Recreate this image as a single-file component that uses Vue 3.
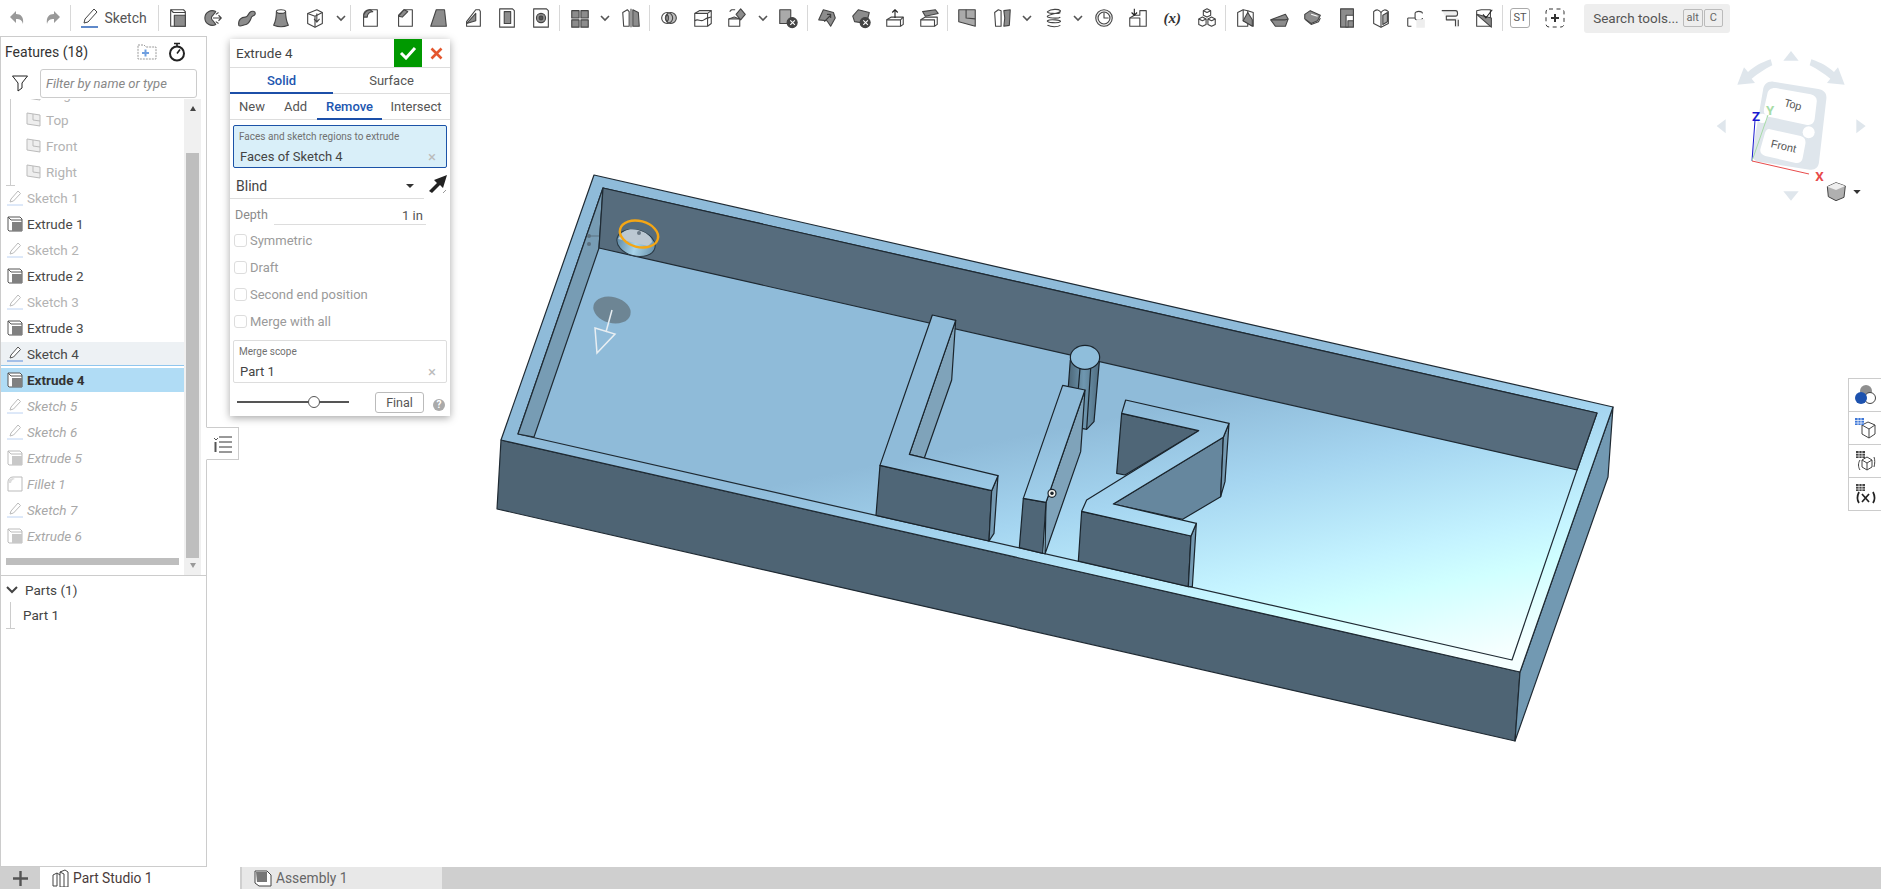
<script setup>
const G = '#8c8c8c', W = '#fff', N = 'none', D = '#3c3c3c';
const i = (name, ...paths) => ({ type: 'icon', name, paths });
const sep = { type: 'sep' };
const chev = { type: 'chev' };

const extrudeP = [['M4 3h14l2 2v16H4z', W], ['M4 3l3 3h13', N], ['M8 9h12v12H8z', G]];

const group1 = [
  i('extrude', ...extrudeP),
  i('revolve', ['M15 5a8 8 0 1 0 0 14l-3-4a3.5 3.5 0 0 1 0-6z', G], ['M12 12h9M18 9l3 3-3 3M15 8l3-2M15 16l3 2', N]),
  i('sweep', ['M3 20c-1-6 3-9 7-9 3 0 3-3 5-5s6-2 6 1-3 2-4 4-2 7-6 8-7 3-8 1z', G]),
  i('loft', ['M7 5c0 6-1 11-3 15 5 2 11 2 16 0-2-4-3-9-3-15z', G], ['M7 5a5 2 0 1 0 10 0a5 2 0 1 0-10 0z', W]),
  i('thicken', ['M4 7l10-4 6 3v12l-8 4-8-4z', W], ['M4 7l8 3 8-4M12 10v12', N], ['M14 7v9M11 13l3 3.500 3-3.500', N]),
  chev,
  sep,
  i('fillet', ['M5 21V9a6 6 0 0 1 6-6h9v18z', W], ['M5 11a8 8 0 0 1 7-8l3 2a6 6 0 0 0-6 6z', G]),
  i('chamfer', ['M5 21V9l6-6h9v18z', W], ['M5 10l6-7 4 2-6 6z', G]),
  i('draft', ['M9 3h9l2 18H3z', G]),
  i('rib', ['M5 21v-5L15 3h4l1 2v16z', W], ['M5 18l10-11v8z', G]),
  i('shell', ['M4 2h14l2 2v18H4z', W], ['M9 5h7v13H9z', G]),
  i('hole', ['M4 2h14l2 2v18H4z', W], ['M7 12a5 5 0 1 0 10 0a5 5 0 1 0-10 0z', G], ['M10 12a2 2 0 1 0 4 0a2 2 0 1 0-4 0z', '#555']),
  sep,
  i('pattern', ['M3 4h8v8H3zM13 4h8v8h-8zM3 14h8v8H3zM13 14h8v8h-8z', G]),
  chev,
  i('mirror', ['M3 6l5-3 2 2v16H4z', W], ['M14 3l6 3 1 15h-7z', G], ['M12 2v20', N]),
  sep,
  i('boolean', ['M8 12a6 6 0 1 0 12 0a6 6 0 1 0-12 0z', '#bbb'], ['M4 12a6 6 0 1 0 12 0a6 6 0 1 0-12 0z', N], ['M10 8a6 6 0 0 1 0 8a6 6 0 0 1 0-8z', G]),
  i('split', ['M3 7l5-3h13v14l-4 3H3z', W], ['M3 7h14v14M17 7l4-3', N], ['M3 15c4-3 6 2 10-1s5-2 8-3', N]),
  i('transform', ['M16 2l5 6-5 6-5-6z', G], ['M3 13l6-2 6 2v8H3z', W], ['M3 13h12M6 3h4M4 5l2-2', N]),
  chev,
  i('delete', ['M3 3h12v15H3z', '#aaa'], ['M11 17a5.500 5.500 0 1 0 11 0a5.500 5.500 0 1 0-11 0z', '#444'], ['M14.500 14.500l5 5M19.500 14.500l-5 5', N, W]),
  sep,
  i('moveface', ['M3 14L8 3l11 3 2 6-5 9-4-6z', G], ['M9 16l7-7M12 8h4v4', N, D]),
  i('delface', ['M3 10l6-7 12 3-3 12-13-2z', G], ['M11 17a5.500 5.500 0 1 0 11 0a5.500 5.500 0 1 0-11 0z', '#444'], ['M14.500 14.500l5 5M19.500 14.500l-5 5', N, W]),
  i('offset', ['M3 14l5-3h13v8l-3 2H3z', W], ['M3 14h15v7M18 14l3-3', N], ['M12 12V3M9 6l3-3 3 3', N, '#222']),
  i('replace', ['M3 14l5-3h13v8l-3 2H3z', W], ['M3 14h15v7', N], ['M5 5l14-2 3 4-14 3z', G]),
  sep,
  i('plane', ['M3 3h18v18L3 16z', '#aaa'], ['M11 3v9l10 1', N]),
  i('wrap', ['M4 6l4-3 3 1v17H5z', W], ['M14 4l7-1-1 17-6 1 1-9z', G]),
  chev,
  i('helix', ['M6 5c4-3 12-3 14-1s-12 4-14 6 12 3 14 1M6 10c-2 2 12 3 14 1M6 15c-2 2 12 3 14 1s-12-3-14-1M6 5c-2 2 12 3 14 1M6 20c4 2 11 2 14 0', N]),
  chev,
  i('clock', ['M3 12a9 9 0 1 0 18 0a9 9 0 1 0-18 0z', '#eee'], ['M5.500 12a6.500 6.500 0 1 0 13 0a6.500 6.500 0 1 0-13 0z', W], ['M12 6v6h5', N]),
  i('derive', ['M3 12l5-3h6V4h7v17H3z', W], ['M3 12h11v9', N], ['M8 2v7l-3-3M8 9l3-3', N, '#222']),
  { type: 'var' },
  i('cubes', ['M12 2l4 2v5l-4 2-4-2V4z', W], ['M7 11l4 2v6l-4 2-4-2v-6z', W], ['M17 11l4 2v6l-4 2-4-2v-6z', W], ['M8 4l4 2 4-2M3 13l4 2 4-2M13 13l4 2 4-2', N]),
  sep,
  i('sm1', ['M4 6l6-3 5 1v17H4z', W], ['M10 3v12l11 6V6l-6-2', N], ['M10 15l10 6v-7l-5-8z', G]),
  i('sm2', ['M3 14l16-6 3 5-3 8H8z', G], ['M3 14l16 0 3-1', N]),
  i('sm3', ['M3 8l6-4 11 5-3 6-7 3-7-5z', G], ['M4 14l6 5 8-3 2-4', N], ['M10 8l7 2', N, W]),
  i('sm4', ['M5 2h14v20H5z', G], ['M11 9h8v6h-6v7h-2z', W]),
  i('sm5', ['M4 5c3-3 6-2 8 1 2-3 5-4 8-1v13l-8 4-8-4z', W], ['M12 6v16', N], ['M14 9l5-3v10l-5 3z', '#aaa']),
  i('sm6', ['M3 12v9M3 12h8V7c0-3 8-3 8 0M11 12c0 3 8 3 8 0M3 21h4', N], ['M13 14h8v8h-8z', '#eee', '#eee']),
  i('sm7', ['M3 3h17v7H9v2h12v10h-4v-7H9z', '#eee', 'none'], ['M3 4h15c3 0 3 6 0 6H8v4h10v7M21 14v7', N]),
  i('sm8', ['M4 4l5-1h10v18H4z', W], ['M4 8l16 14V12z', G], ['M11 8l3 4 7-9', N, '#222']),
];

const planes = [
  { label: 'Origin', kind: 'plane' },
  { label: 'Top', kind: 'plane' },
  { label: 'Front', kind: 'plane' },
  { label: 'Right', kind: 'plane' },
];
const features = [
  { label: 'Sketch 1', kind: 'sketch', cls: 'off' },
  { label: 'Extrude 1', kind: 'extrude' },
  { label: 'Sketch 2', kind: 'sketch', cls: 'off' },
  { label: 'Extrude 2', kind: 'extrude' },
  { label: 'Sketch 3', kind: 'sketch', cls: 'off' },
  { label: 'Extrude 3', kind: 'extrude' },
  { label: 'Sketch 4', kind: 'sketch', cls: 'hover' },
  { label: 'Extrude 4', kind: 'extrude', cls: 'current' },
  { label: 'Sketch 5', kind: 'sketch', cls: 'roll' },
  { label: 'Sketch 6', kind: 'sketch', cls: 'roll' },
  { label: 'Extrude 5', kind: 'extrude', cls: 'roll' },
  { label: 'Fillet 1', kind: 'fillet', cls: 'roll' },
  { label: 'Sketch 7', kind: 'sketch', cls: 'roll' },
  { label: 'Extrude 6', kind: 'extrude', cls: 'roll' },
];
const checks = ['Symmetric', 'Draft', 'Second end position', 'Merge with all'];
</script>

<template>
  <div class="app">
    <header class="toolbar">
      <button class="tb-icon"><svg width="20" height="20" viewBox="0 0 20 20"><path d="M8 3L2 9l6 6v-4c4 0 6 1 7 5 1-7-2-10-7-10z" fill="#999"/></svg></button>
      <button class="tb-icon"><svg width="20" height="20" viewBox="0 0 20 20"><path d="M12 3l6 6-6 6v-4c-4 0-6 1-7 5-1-7 2-10 7-10z" fill="#999"/></svg></button>
      <span class="sep"></span>
      <button class="sketch-btn">
        <svg width="20" height="24" viewBox="0 0 20 24"><path d="M4 17l1-4L14 3l3 3-9 10z" fill="#fff" stroke="#444"/><path d="M1 21h17" stroke="#2a62b8" stroke-width="1.500"/></svg>
        <span>Sketch</span>
      </button>
      <span class="sep"></span>
      <template v-for="(t, n) in group1" :key="n">
        <span v-if="t.type === 'sep'" class="sep"></span>
        <span v-else-if="t.type === 'chev'" class="chev"><svg width="10" height="7" viewBox="0 0 10 7"><path d="M1 1l4 4 4-4" fill="none" stroke="#555" stroke-width="1.600"/></svg></span>
        <span v-else-if="t.type === 'var'" class="tb-icon var-text">(x)</span>
        <span v-else class="tb-icon">
          <svg width="22" height="22" viewBox="0 0 24 24" stroke-width="1.200" stroke-linejoin="round">
            <path v-for="(p, k) in t.paths" :key="k" :d="p[0]" :fill="p[1]" :stroke="p[2] || '#444'"/>
          </svg>
        </span>
      </template>
      <span class="sep"></span>
      <span class="st">ST</span>
      <span class="plus-box"><svg width="20" height="20" viewBox="0 0 20 20"><rect x="1" y="1" width="18" height="18" rx="3" fill="none" stroke="#333" stroke-dasharray="4 3.500"/><path d="M10 6v8M6 10h8" stroke="#333" stroke-width="2"/></svg></span>
      <div class="search">Search tools...<span class="kbds"><kbd>alt</kbd><kbd>C</kbd></span></div>
    </header>

    <main class="main">
      <aside class="left">
        <div class="f-head">
          <span>Features (18)</span>
          <svg class="f-folder" width="20" height="16" viewBox="0 0 20 16"><path d="M1 1h6l2 2h10v12H1z" fill="#fff" stroke="#999" stroke-dasharray="2 1"/><path d="M5 9h7M8.500 5.500v7" stroke="#6f9fe0" stroke-width="2"/></svg>
          <svg class="f-timer" width="18" height="20" viewBox="0 0 18 20"><circle cx="9" cy="11.500" r="7" fill="#fff" stroke="#222" stroke-width="2"/><path d="M6 1.500h6M9 2v3M9 11.500l3-4" stroke="#222" stroke-width="1.600"/></svg>
        </div>
        <div class="f-filter">
          <svg width="16" height="17" viewBox="0 0 16 17"><path d="M.5 1h15L10 8v5l-4 3V8z" fill="#fff" stroke="#222"/></svg>
          <div class="f-input">Filter by name or type</div>
        </div>
        <div class="tree">
          <div class="list">
            <div class="planes">
              <div v-for="p in planes" :key="p.label" class="row plane off">
                <svg width="16" height="16" viewBox="0 0 16 16"><path d="M1 1l13 2v11L1 12z" fill="#eee" stroke="#bbb"/><path d="M7 2v6l7 1" fill="none" stroke="#bbb"/></svg>
                <span>{{ p.label }}</span>
              </div>
            </div>
            <div v-for="f in features" :key="f.label" class="row" :class="f.cls">
              <svg v-if="f.kind === 'sketch'" class="ri" width="16" height="16" viewBox="0 0 16 16"><path d="M3 12l1-3 7-8 2.500 2.500-7 7.500z" fill="#fff" stroke="currentColor"/><path class="ul" d="M0 15h16"/></svg>
              <svg v-else-if="f.kind === 'fillet'" class="ri" width="16" height="16" viewBox="0 0 16 16"><path d="M1 15V6a5 5 0 0 1 5-5h9v14z" fill="#fff" stroke="currentColor"/><path d="M1 7a6 6 0 0 1 5-5l2 1a5 5 0 0 0-4 4z" fill="#ddd"/></svg>
              <svg v-else class="ri" width="16" height="16" viewBox="0 0 16 16"><path d="M1 1h12l2 2v12H2l-1-1z" fill="#fff" stroke="currentColor"/><path d="M1 1l3 3h11" fill="none" stroke="currentColor"/><path d="M5 6h10v9H5z" class="fill-g"/></svg>
              <span>{{ f.label }}</span>
            </div>
            <div class="hbar"></div>
          </div>
          <div class="vbar">
            <i class="up"></i>
            <div class="v-space"></div>
            <div class="thumb"></div>
            <i class="dn"></i>
          </div>
        </div>
        <div class="parts">
          <div class="parts-head">
            <svg width="12" height="8" viewBox="0 0 12 8"><path d="M1 1l5 5 5-5" fill="none" stroke="#444" stroke-width="2"/></svg>
            <span>Parts (1)</span>
          </div>
          <div class="part">Part 1</div>
        </div>
      </aside>

      <section class="viewport">
        <svg class="scene" width="1674" height="831" viewBox="207 36 1674 831">
          <defs>
            <linearGradient id="floor" gradientUnits="userSpaceOnUse" x1="800" y1="480" x2="859.600" y2="778">
              <stop offset="0" stop-color="#8fbbd9"/><stop offset=".284" stop-color="#a5d5f0"/><stop offset=".613" stop-color="#c4f3ff"/><stop offset=".748" stop-color="#d0ffff"/><stop offset="1" stop-color="#f5ffff"/>
            </linearGradient>
            <linearGradient id="floorZ" gradientUnits="userSpaceOnUse" x1="-180" y1="540" x2="-1.200" y2="1434">
              <stop offset="0" stop-color="#8fbbd9"/><stop offset=".284" stop-color="#a5d5f0"/><stop offset=".613" stop-color="#c4f3ff"/><stop offset=".748" stop-color="#d0ffff"/><stop offset="1" stop-color="#f5ffff"/>
            </linearGradient>
            <linearGradient id="cyl" x1="0" x2="1" y1="0" y2="0">
              <stop offset="0" stop-color="#4c6778"/><stop offset=".5" stop-color="#6f97b0"/><stop offset="1" stop-color="#4f6c7f"/>
            </linearGradient>
            <linearGradient id="holeG" x1="0" x2="1" y1="0" y2="0">
              <stop offset="0" stop-color="#5f8aa6"/><stop offset=".5" stop-color="#a8d4ea"/><stop offset="1" stop-color="#6b94ad"/>
            </linearGradient>
          </defs>
          <g stroke="#1f2a33" stroke-width="1.200" stroke-linejoin="round">
            <polygon points="501,440 1520,672 1515,741 497,509" fill="#4e6474"/>
            <polygon points="1613,407 1608,477 1515,741 1520,672" fill="#7299b2"/>
            <polygon points="594,175 1613,407 1520,672 501,440" fill="url(#floor)"/>
            <polygon points="603,188 1597,413 1577,470 1512,660 518,434" fill="url(#floor)"/>
            <polygon points="603,188 599,248 534,437 518,434" fill="#779cb4"/>
            <polygon points="603,188 1597,413 1577,470 599,248" fill="#566c7d"/>
          </g>
          <!-- hole -->
          <ellipse cx="636" cy="243" rx="19.500" ry="13" transform="rotate(15 636 243)" fill="url(#holeG)" stroke="#2b3a45"/>
          <path d="M620 236c3-6 10-8 18-6 8 2 14 7 14 12l-4 4-30-7z" fill="#bcc8d2"/>
          <ellipse cx="639" cy="234" rx="19.500" ry="13" transform="rotate(15 639 234)" fill="none" stroke="#f5a614" stroke-width="2.400"/>
          <circle cx="639" cy="233" r="2" fill="#6b7986"/>
          <circle cx="589" cy="236" r="2" fill="#5d7281"/>
          <circle cx="589" cy="244" r="2" fill="#5d7281"/>
          <path d="M589 236h10" stroke="#5d7281"/>
          <ellipse cx="612" cy="310" rx="19" ry="13" transform="rotate(15 612 310)" fill="#6d8594"/>
          <path d="M612 310l-6 22" stroke="#e8eef2" stroke-width="1.500"/>
          <path d="M595 328l20 6-18 19z" fill="none" stroke="#e8eef2" stroke-width="1.500"/>

          <!-- raised letters, coordinates in a 3x space -->
          <g transform="translate(860 300) scale(.33333)" stroke="#1a242c" stroke-width="3.600" stroke-linejoin="round">
            <polygon points="631,180 718,185 702,365 680,388 665,385 625,260" fill="url(#cyl)"/>
            <path d="M660 205l-5 60M692 207l-12 180" fill="none"/>
            <ellipse cx="675" cy="172" rx="44" ry="36" fill="#8fbedb"/>
            <polygon points="287,61 275,240 193,474 148,463" fill="#7fa3ba"/>
            <polygon points="60,496 395,572 387,723 48,646" fill="#4f6677"/>
            <polygon points="395,572 414,527 402,700 387,723" fill="#7499b1"/>
            <polygon points="217,45 287,61 148,463 414,527 395,572 60,496" fill="url(#floorZ)"/>
            <polygon points="675,270 662,455 555,762 558,607" fill="#7fa3ba"/>
            <polygon points="490,595 558,607 548,760 478,743" fill="#4f6677"/>
            <polygon points="608,256 675,270 558,607 490,595" fill="url(#floorZ)"/>
            <polygon points="785,340 1016,392 795,525 770,520" fill="#4f6677"/>
            <polygon points="1090,412 1082,590 968,658 760,612" fill="#66879e"/>
            <polygon points="1107,370 1090,412 1082,590 1095,545" fill="#7499b1"/>
            <polygon points="665,634 993,708 985,860 655,783" fill="#4f6677"/>
            <polygon points="993,708 1009,670 997,860 985,860" fill="#7499b1"/>
            <polygon points="797,300 1107,370 1090,412 760,612 1009,670 993,708 665,634 680,600 1016,392 785,340" fill="url(#floorZ)"/>
            <circle cx="576" cy="580" r="12" fill="#f2f2ee"/>
            <circle cx="576" cy="580" r="3.500" fill="#222"/>
          </g>

          <!-- view cube, coordinates in a 3x space -->
          <g transform="translate(1690 40) scale(.33333)">
            <g fill="#dfe6ec">
              <polygon points="303,33 280,62 326,62"/>
              <polygon points="80,258 107,238 107,280"/>
              <polygon points="527,258 499,238 499,280"/>
              <polygon points="280,454 326,454 303,482"/>
              <path d="M242 58c-30 10-50 22-68 38l-12-14-20 52 53-5-10-13c18-14 38-28 62-40z"/>
              <path d="M364 58c30 10 50 22 68 38l12-14 20 52-53-5 10-13c-18-14-38-28-62-40z"/>
              <path d="M250 125l135 22c18 3 26 14 24 30l-22 190c-2 16-12 24-28 22l-152-24c-14-2-22-12-20-28l32-186c2-18 14-28 31-26z"/>
            </g>
            <path d="M262 145l100 18c14 3 20 12 18 24l-6 50c-2 14-12 20-26 17l-112-24c-12-3-16-12-14-24l10-44c3-14 14-20 30-17z" fill="#fff"/>
            <path d="M240 268l92 20c12 3 16 12 14 24l-8 42c-2 12-12 17-24 14l-88-20c-12-3-18-12-14-24l12-42c3-12 10-17 16-14z" fill="#fff"/>
            <circle cx="356" cy="277" r="18" fill="#fff"/>
            <circle cx="217" cy="235" r="14" fill="#fff"/>
            <text x="308" y="205" class="cube-t" transform="rotate(15 308 197)">Top</text>
            <text x="280" y="330" class="cube-t" transform="rotate(13 280 322)">Front</text>
            <path d="M186 363l9-122" stroke="#1a1ad0" stroke-width="3"/>
            <path d="M186 363l48-138" stroke="#a6dca6" stroke-width="3"/>
            <path d="M186 363l171 39" stroke="#e84a4a" stroke-width="3"/>
            <text x="186" y="243" class="ax" fill="#1a1ad0">Z</text>
            <text x="228" y="226" class="ax" fill="#a6dca6">Y</text>
            <text x="376" y="424" class="ax" fill="#e84a4a">X</text>
            <polygon points="412,440 438,428 466,438 462,472 438,482 415,470" fill="#b0b0b0" stroke="#444" stroke-width="3"/>
            <polygon points="412,440 438,450 466,438 438,428" fill="#eee"/>
            <polygon points="490,450 512,450 501,462" fill="#333"/>
          </g>
        </svg>

        <div class="side-tools">
          <span><svg width="22" height="22" viewBox="0 0 22 22"><circle cx="12" cy="7" r="6" fill="#8f8f8f"/><circle cx="16" cy="14" r="5.500" fill="#fff" stroke="#444"/><circle cx="7" cy="14" r="6" fill="#1d52ae"/></svg></span>
          <span><svg width="22" height="22" viewBox="0 0 22 22"><path d="M8 8l6-3 7 3v9l-6 4-7-4z" fill="#fff" stroke="#444"/><path d="M8 8l7 4 6-4M15 12v9" fill="none" stroke="#444"/><path d="M1 1h9v7H1z" fill="#3f78d8"/><path d="M1 3.500h9M1 6h9M4 1v7M7 1v7" stroke="#fff" stroke-width=".7"/></svg></span>
          <span><svg width="22" height="22" viewBox="0 0 22 22"><path d="M8 10l5-3 5 3v7l-5 3-5-3z" fill="#fff" stroke="#444"/><path d="M8 10l5 3 5-3M13 13v7M6 10c-2 3-2 7 0 10M20 7c1 3 1 6 0 10" fill="none" stroke="#444"/><path d="M2 1h9v7H2z" fill="#444"/><path d="M2 3.500h9M2 6h9M5 1v7M8 1v7" stroke="#fff" stroke-width=".7"/></svg></span>
          <span class="fx"><svg width="22" height="22" viewBox="0 0 22 22"><path d="M2 1h9v7H2z" fill="#444"/><path d="M2 3.500h9M2 6h9M5 1v7M8 1v7" stroke="#fff" stroke-width=".7"/><path d="M5 9c-2 4-2 8 0 11M19 9c2 4 2 8 0 11M8 11l7 8M15 11l-7 8" fill="none" stroke="#222" stroke-width="1.700"/></svg></span>
        </div>
      </section>

      <div class="list-tab"><svg width="20" height="20" viewBox="0 0 20 20"><path d="M1 4l2 2 2-2" fill="none" stroke="#555"/><path d="M2.500 8v10" stroke="#555" stroke-width="2"/><path d="M6 3h13M6 8h13M6 13h13M6 18h13" stroke="#333"/></svg></div>

      <div class="dialog">
        <div class="d-title">
          <span>Extrude 4</span>
          <button class="ok"><svg width="18" height="14" viewBox="0 0 18 14"><path d="M2 7l5 5 9-10" fill="none" stroke="#fff" stroke-width="3"/></svg></button>
          <button class="cancel"><svg width="13" height="13" viewBox="0 0 13 13"><path d="M1.500 1.500l10 10M11.500 1.500l-10 10" stroke="#e4572e" stroke-width="2.600"/></svg></button>
        </div>
        <div class="d-tabs">
          <span class="on t-solid">Solid</span>
          <span class="t-surface">Surface</span>
        </div>
        <div class="d-tabs ops">
          <span class="o-new">New</span>
          <span class="o-add">Add</span>
          <span class="on o-rem">Remove</span>
          <span class="o-int">Intersect</span>
        </div>
        <div class="q active">
          <label>Faces and sketch regions to extrude</label>
          <div class="q-v"><span>Faces of Sketch 4</span><em>×</em></div>
        </div>
        <div class="blind">
          <div class="sel"><span>Blind</span><i></i></div>
          <svg width="20" height="20" viewBox="0 0 20 20"><path d="M1 17l8-8-3-3L19 1l-4 13-3-3-8 8z" fill="#222"/><path d="M15 19l3-3" stroke="#999"/></svg>
        </div>
        <div class="depth">
          <span>Depth</span>
          <div>1 in</div>
        </div>
        <label v-for="c in checks" :key="c" class="chk"><i></i>{{ c }}</label>
        <div class="q scope">
          <label>Merge scope</label>
          <div class="q-v"><span>Part 1</span><em>×</em></div>
        </div>
        <div class="d-foot">
          <div class="slider"><i></i></div>
          <button class="final">Final</button>
          <span class="help">?</span>
        </div>
      </div>
    </main>

    <footer class="tabs">
      <span class="add"><svg width="15" height="15" viewBox="0 0 15 15"><path d="M7.500 0v15M0 7.500h15" stroke="#555" stroke-width="2.400"/></svg></span>
      <div class="tab active">
        <svg width="18" height="18" viewBox="0 0 18 18"><path d="M1 6l4-2v13H1zM8 3l5-2 3 2v15H8z" fill="#fff" stroke="#444"/><path d="M5 4l3 2M8 3l4 2v13" fill="none" stroke="#444"/></svg>
        <span>Part Studio 1</span>
      </div>
      <div class="tab">
        <svg width="18" height="18" viewBox="0 0 18 18"><path d="M1 2h12l4 4v11H5l-4-3z" fill="#fff" stroke="#444"/><path d="M2 3h11v10H3z" fill="#777"/></svg>
        <span>Assembly 1</span>
      </div>
    </footer>
  </div>
</template>

<style>
html, body { margin: 0; background: #fff; overflow: hidden; }
</style>

<style scoped>
.app { width: 1881px; height: 889px; display: flex; flex-direction: column; font-family: Roboto, "Noto Sans", sans-serif; font-size: 13px; color: #444; background: #fff; overflow: hidden; }
button { font: inherit; color: inherit; background: none; border: 0; padding: 0; }

.toolbar { height: 36px; flex: none; display: flex; align-items: center; padding-left: 1px; box-sizing: border-box; }
.tb-icon { width: 34.2px; flex: none; display: flex; align-items: center; justify-content: center; }
.sep { width: 4px; height: 26px; flex: none; position: relative; }
.sep::after { content: ""; position: absolute; left: 1px; top: 0; bottom: 0; width: 1px; background: #d8d8d8; }
.chev { width: 17px; flex: none; display: flex; justify-content: center; }
.sketch-btn { width: 84px; flex: none; display: flex; align-items: center; gap: 4px; padding-left: 7px; box-sizing: border-box; font-size: 14px; color: #555; }
.var-text { font: italic 700 15px "Liberation Serif", serif; color: #333; }
.st { width: 20px; height: 20px; margin: 0 5px; flex: none; border: 1px solid #aaa; border-radius: 3px; box-sizing: border-box; font-size: 11px; line-height: 18px; text-align: center; color: #555; }
.plus-box { width: 34px; margin-left: 3px; flex: none; display: flex; justify-content: center; }
.search { width: 146px; height: 29px; margin-left: 12px; flex: none; background: #eee; border-radius: 3px; box-sizing: border-box; padding-left: 9px; display: flex; align-items: center; font-size: 13.500px; color: #555; white-space: nowrap; }
.kbds { display: flex; margin-left: 4px; }
kbd { font: 11px Roboto, sans-serif; border: 1px solid #bbb; border-radius: 2px; padding: 2px 3px; color: #666; line-height: 12px; }
kbd + kbd { padding: 2px 5px; margin-left: 1px; }

.main { flex: 1; min-height: 0; display: flex; position: relative; }
.left { width: 207px; flex: none; box-sizing: border-box; border: 1px solid #ccc; display: flex; flex-direction: column; }
.f-head { height: 30px; flex: none; display: flex; align-items: center; padding-left: 4px; font-size: 14px; color: #333; }
.f-folder { margin-left: 49px; }
.f-timer { margin-left: 11px; }
.f-filter { height: 32px; flex: none; display: flex; align-items: center; padding-left: 11px; gap: 12px; }
.f-input { width: 157px; height: 29px; box-sizing: border-box; border: 1px solid #ccc; border-radius: 3px; padding-left: 5px; line-height: 27px; font-style: italic; font-size: 13px; color: #888; }
.tree { height: 476px; flex: none; display: flex; padding-right: 4px; border-bottom: 1px solid #ccc; }
.list { width: 183px; flex: none; overflow: hidden; position: relative; padding-top: 8px; box-sizing: border-box; display: flex; flex-direction: column; }
.planes { margin-top: -26px; position: relative; flex: none; display: flex; flex-direction: column; }
.planes::before { content: ""; position: absolute; left: 9px; top: 0; bottom: 0; border-left: 1px solid #ccc; }
.planes::after { content: ""; position: absolute; left: 5px; bottom: -1px; width: 9px; border-top: 1px solid #ccc; }
.row { height: 24px; flex: none; margin: 1px 0; display: flex; align-items: center; padding-left: 6px; gap: 4px; font-size: 13.500px; color: #484848; white-space: nowrap; }
.row.plane { padding-left: 25px; gap: 4px; }
.row.off { color: #b3b3b3; }
.row .ri { color: #555; flex: none; }
.ul { stroke: #5b8ddb; }
.fill-g { fill: #808080; }
.row.off .ri, .row.roll .ri { color: #bbb; }
.row.off .ul, .row.roll .ul { stroke: #bcd2f2; }
.row.off .fill-g, .row.roll .fill-g { fill: #c8c8c8; }
.row.off span { color: #b3b3b3; }
.row.roll { color: #a8a8a8; font-style: italic; }
.row.hover { background: #edf1f4; box-shadow: inset 0 -1px 0 #8fc6ee; }
.row.current { background: #b0dcf5; font-weight: 700; color: #333; }
.hbar { position: absolute; left: 5px; right: 5px; top: 459px; height: 7px; background: #bebebe; }
.vbar { width: 17px; flex: none; background: #f0f0f0; display: flex; flex-direction: column; align-items: center; }
.vbar .up { width: 0; height: 0; margin: 7px 0 0; border: 3.500px solid transparent; border-top: 0; border-bottom: 5px solid #444; }
.v-space { height: 42px; flex: none; }
.thumb { width: 13px; height: 405px; flex: none; background: #bebebe; }
.vbar .dn { width: 0; height: 0; margin-top: 5px; border: 3.500px solid transparent; border-bottom: 0; border-top: 5px solid #999; }
.parts { flex: 1; position: relative; }
.parts-head { height: 28px; display: flex; align-items: center; padding-left: 5px; gap: 7px; font-size: 13.500px; }
.part { padding-left: 22px; margin-top: 1px; font-size: 13.500px; line-height: 20px; position: relative; }
.part::before { content: ""; position: absolute; left: 9px; top: -3px; height: 26px; border-left: 1px solid #ccc; }
.part::after { content: ""; position: absolute; left: 5px; top: 23px; width: 9px; border-top: 1px solid #ccc; }

.viewport { flex: 1; position: relative; min-width: 0; }
.scene { display: block; }
.cube-t { font: 33px "Liberation Sans", sans-serif; fill: #555; text-anchor: middle; }
.ax { font: 700 40px Roboto, sans-serif; }
.side-tools { position: absolute; right: 0; top: 342px; width: 32px; border: 1px solid #ccc; border-right: 0; display: flex; flex-direction: column; background: #fff; }
.side-tools span { height: 32px; display: flex; align-items: center; justify-content: center; border-top: 1px solid #ccc; }
.side-tools span:first-child { border-top: 0; }

.list-tab { position: absolute; left: 206px; top: 391px; width: 33px; height: 33px; box-sizing: border-box; background: #fff; border: 1px solid #ccc; border-left-color: #fff; display: flex; align-items: center; justify-content: center; }

.dialog { position: absolute; left: 230px; top: 3px; width: 220px; height: 377px; background: #fff; box-shadow: 0 2px 8px rgba(0, 0, 0, .35); display: flex; flex-direction: column; }
.d-title { height: 28px; flex: none; display: flex; align-items: center; padding-left: 6px; border-bottom: 1px solid #ddd; font-size: 13.500px; color: #444; }
.d-title span { flex: 1; }
.ok { width: 28px; height: 28px; background: #090; display: flex; align-items: center; justify-content: center; }
.cancel { width: 28px; height: 28px; display: flex; align-items: center; justify-content: center; }
.d-tabs { height: 26px; flex: none; position: relative; border-bottom: 1px solid #ddd; box-sizing: border-box; display: flex; font-size: 13px; }
.d-tabs span { display: flex; align-items: center; justify-content: center; color: #555; box-sizing: border-box; }
.d-tabs span.on { color: #1c56b0; font-weight: 500; border-bottom: 2px solid #1c4fa8; margin-bottom: -1px; }
.t-solid { width: 103px; }
.t-surface { flex: 1; }
.o-new { width: 44px; }
.o-add { width: 43px; }
.o-rem { width: 65px; }
.o-int { flex: 1; }
.q { margin: 5px 3px 0; height: 43px; flex: none; box-sizing: border-box; border: 1px solid #ddd; border-radius: 2px; padding: 5px 5px 0; }
.q.active { background: #d9eff9; border-color: #1b52a7; }
.q label { display: block; font-size: 10px; line-height: 12px; color: #707070; }
.q-v { display: flex; justify-content: space-between; align-items: center; margin-top: 6px; font-size: 13px; color: #444; padding-left: 1px; }
.q-v em { font-style: normal; font-size: 15px; line-height: 14px; color: #bbb; padding-right: 5px; }
.blind { height: 31px; flex: none; display: flex; align-items: center; }
.sel { width: 194px; height: 31px; box-sizing: border-box; padding: 6px 6px 0; border-bottom: 1px solid #ddd; display: flex; align-items: center; justify-content: space-between; font-size: 14px; color: #444; }
.sel i { width: 0; height: 0; border: 4px solid transparent; border-top: 4.500px solid #333; border-bottom: 0; margin-right: 4px; }
.blind svg { margin: 0 0 0 4px; }
.depth { height: 26px; flex: none; display: flex; align-items: flex-end; padding-left: 5px; font-size: 12.500px; line-height: 20px; color: #8a8a8a; }
.depth div { margin-left: 6px; width: 152px; height: 20px; box-sizing: border-box; line-height: 21px; border-bottom: 1px solid #ddd; text-align: right; padding-right: 3px; color: #555; font-size: 13px; }
.chk { height: 27px; flex: none; display: flex; align-items: center; padding-left: 4px; gap: 3px; font-size: 13px; color: #9a9a9a; position: relative; top: 2px; }
.chk i { width: 11px; height: 11px; border: 1px solid #ddd; border-radius: 3px; }
.q.scope { margin-top: 7px; }
.d-foot { height: 34px; flex: none; box-sizing: border-box; display: flex; align-items: center; padding: 4px 5px 0 7px; }
.slider { width: 112px; height: 2px; background: #555; position: relative; }
.slider i { position: absolute; left: 71px; top: -5px; width: 10px; height: 10px; border: 1px solid #555; border-radius: 50%; background: #fff; }
.final { margin-left: 26px; width: 49px; height: 21px; border: 1px solid #bbb; border-radius: 3px; font-size: 12.500px; color: #555; background: #fff; }
.help { margin: 6px 0 0 9px; width: 12px; height: 12px; border-radius: 50%; background: #aaa; color: #fff; font: 700 10px/12px Roboto, sans-serif; text-align: center; }

.tabs { height: 22px; flex: none; display: flex; background: #cfcfcf; }
.add { width: 40px; display: flex; align-items: center; justify-content: center; }
.tab { width: 200px; display: flex; align-items: center; gap: 3px; padding-left: 12px; box-sizing: border-box; background: #e8e8e8; font-size: 13.800px; color: #666; }
.tab + .tab { margin-left: 2px; padding-left: 12px; gap: 4px; }
.tab.active { background: #fff; color: #4a3a3a; }
</style>
